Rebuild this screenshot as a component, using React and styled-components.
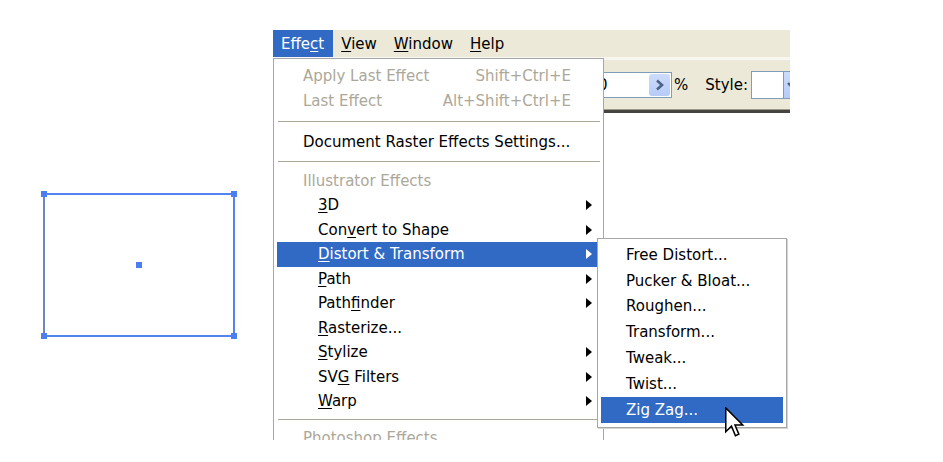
import React from "react";
import styled, { createGlobalStyle } from "styled-components";

const GlobalStyle = createGlobalStyle`
  html, body {
    margin: 0;
    padding: 0;
    background: #ffffff;
  }
  body {
    font-family: "DejaVu Sans", "Liberation Sans", sans-serif;
    font-size: 15px;
    color: #000;
  }
`;

const effectItems = [
  { type: "item", label: "Apply Last Effect", shortcut: "Shift+Ctrl+E", disabled: true },
  { type: "item", label: "Last Effect", shortcut: "Alt+Shift+Ctrl+E", disabled: true },
  { type: "sep", size: 17 },
  { type: "item", label: "Document Raster Effects Settings..." },
  { type: "sep", size: 14 },
  { type: "item", label: "Illustrator Effects", disabled: true },
  { type: "item", label: "3D", key: 0, indent: true, sub: true },
  { type: "item", label: "Convert to Shape", key: 3, indent: true, sub: true },
  { type: "item", label: "Distort & Transform", key: 0, indent: true, sub: true, active: true },
  { type: "item", label: "Path", key: 0, indent: true, sub: true },
  { type: "item", label: "Pathfinder", key: 4, indent: true, sub: true },
  { type: "item", label: "Rasterize...", key: 0, indent: true },
  { type: "item", label: "Stylize", key: 0, indent: true, sub: true },
  { type: "item", label: "SVG Filters", key: 2, indent: true, sub: true },
  { type: "item", label: "Warp", key: 0, indent: true, sub: true },
  { type: "sep", size: 12 },
  { type: "item", label: "Photoshop Effects", disabled: true },
];

const distortItems = [
  "Free Distort...",
  "Pucker & Bloat...",
  "Roughen...",
  "Transform...",
  "Tweak...",
  "Twist...",
  "Zig Zag...",
];

function Label({ text, k }) {
  if (k === undefined) return <span>{text}</span>;
  return (
    <span>
      {text.slice(0, k)}
      <Key>{text[k]}</Key>
      {text.slice(k + 1)}
    </span>
  );
}

function Cursor() {
  return (
    <CursorWrap>
      <svg width="20" height="31" viewBox="0 0 13 20">
        <path
          d="M0.5 0.5 L0.5 16 L4.2 12.4 L6.8 18.6 L9 17.6 L6.5 11.6 L11.5 11.6 Z"
          fill="#fff"
          stroke="#000"
          strokeWidth="1"
          strokeLinejoin="miter"
        />
      </svg>
    </CursorWrap>
  );
}

export default function App() {
  return (
    <>
      <GlobalStyle />
      <Stage>
        <Artboard>
          <Shape>
            <Handle $x="0%" $y="0%" />
            <Handle $x="100%" $y="0%" />
            <Handle $x="0%" $y="100%" />
            <Handle $x="100%" $y="100%" />
            <Handle $x="50%" $y="50%" />
          </Shape>
        </Artboard>

        <AppShot>
          <MenuBar>
            <BarItem $open>
              <Label text="Effect" k={4} />
            </BarItem>
            <BarItem>
              <Label text="View" k={0} />
            </BarItem>
            <BarItem>
              <Label text="Window" k={0} />
            </BarItem>
            <BarItem>
              <Label text="Help" k={0} />
            </BarItem>
          </MenuBar>

          <Toolbar>
            <NumberField>
              <FieldText>100</FieldText>
              <SpinButton>
                <svg width="10" height="12" viewBox="0 0 10 12">
                  <path d="M2 1.5 L7 6 L2 10.5" fill="none" stroke="#4d6185" strokeWidth="2.6" />
                </svg>
              </SpinButton>
            </NumberField>
            <ToolLabel>%</ToolLabel>
            <ToolLabel $gap={17}>Style:</ToolLabel>
            <StyleBox />
            <DropButton>
              <svg width="10" height="10" viewBox="0 0 10 10">
                <path d="M1 3 L5 7 L9 3" fill="none" stroke="#4d6185" strokeWidth="2.4" />
              </svg>
            </DropButton>
          </Toolbar>

          <Menu>
            {effectItems.map((it, i) =>
              it.type === "sep" ? (
                <Separator key={i} $size={it.size} />
              ) : (
                <MenuRow key={i} $indent={it.indent} $disabled={it.disabled} $active={it.active}>
                  <Label text={it.label} k={it.key} />
                  {it.shortcut && <Shortcut>{it.shortcut}</Shortcut>}
                  {it.sub && <SubArrow $active={it.active} />}
                  {it.active && (
                    <SubMenu>
                      {distortItems.map((s, j) => (
                        <SubRow key={s} $active={j === distortItems.length - 1}>
                          {s}
                        </SubRow>
                      ))}
                    </SubMenu>
                  )}
                </MenuRow>
              )
            )}
          </Menu>

          <Cursor />
        </AppShot>
      </Stage>
    </>
  );
}

const Stage = styled.div`
  width: 943px;
  height: 462px;
  display: flex;
  align-items: flex-start;
  overflow: hidden;
`;

const Artboard = styled.div`
  width: 230px;
  padding: 193px 0 0 43px;
  flex-shrink: 0;
`;

const Shape = styled.div`
  position: relative;
  width: 192px;
  height: 144px;
  box-sizing: border-box;
  border: 2px solid #5283f0;
  border-left-color: #6f86c4;
`;

const Handle = styled.div`
  position: absolute;
  left: ${(p) => p.$x};
  top: ${(p) => p.$y};
  width: 6px;
  height: 6px;
  background: #4b7ef2;
  transform: translate(-50%, -50%);
  margin-left: ${(p) => (p.$x === "0%" ? "-1px" : p.$x === "100%" ? "1px" : "0")};
  margin-top: ${(p) => (p.$y === "0%" ? "-1px" : p.$y === "100%" ? "1px" : "0")};
`;

const AppShot = styled.div`
  position: relative;
  margin-top: 30px;
  width: 517px;
  height: 410px;
  overflow: hidden;
  flex-shrink: 0;
`;

const MenuBar = styled.div`
  height: 27px;
  display: flex;
  align-items: stretch;
  background: #ece9d8;
  border-bottom: 3px solid #f7f6f0;
`;

const BarItem = styled.div`
  display: flex;
  align-items: center;
  padding: 0 9px 0 8px;
  background: ${(p) => (p.$open ? "#316ac5" : "transparent")};
  color: ${(p) => (p.$open ? "#fff" : "#000")};
`;

const Key = styled.span`
  text-decoration: underline;
  text-underline-offset: 2px;
  text-decoration-thickness: 1px;
`;

const Toolbar = styled.div`
  height: 50px;
  display: flex;
  align-items: center;
  padding-left: 299px;
  background: #ece9d8;
  border-bottom: 3px solid #45443f;
  box-shadow: inset 0 -1px 0 #9d9a8b;
  white-space: nowrap;
  overflow: hidden;
`;

const NumberField = styled.div`
  width: 100px;
  height: 26px;
  box-sizing: border-box;
  border: 1px solid #7f9db9;
  background: #fff;
  display: flex;
  align-items: center;
  padding: 0 1px 0 6px;
  flex-shrink: 0;
`;

const FieldText = styled.span`
  flex: 1;
`;

const SpinButton = styled.div`
  width: 21px;
  height: 22px;
  border-radius: 3px;
  background: linear-gradient(#cddcfc, #b6cbf7);
  display: flex;
  align-items: center;
  justify-content: center;
`;

const ToolLabel = styled.span`
  margin-left: ${(p) => p.$gap || 2}px;
  flex-shrink: 0;
`;

const StyleBox = styled.div`
  margin-left: 3px;
  width: 32px;
  height: 28px;
  box-sizing: border-box;
  border: 1px solid #7f9db9;
  border-right: none;
  background: #fff;
  flex-shrink: 0;
`;

const DropButton = styled.div`
  width: 18px;
  height: 28px;
  box-sizing: border-box;
  border: 1px solid #7f9db9;
  background: linear-gradient(#cddcfc, #b6cbf7);
  display: flex;
  align-items: center;
  justify-content: center;
  flex-shrink: 0;
`;

const Menu = styled.div`
  position: absolute;
  left: 0;
  top: 28px;
  width: 331px;
  box-sizing: border-box;
  background: #fff;
  border: 1px solid #a7a6aa;
  padding: 5px 0 6px;
  z-index: 2;
`;

const MenuRow = styled.div`
  position: relative;
  height: 24.5px;
  margin: 0 3px;
  display: flex;
  align-items: center;
  padding-left: ${(p) => (p.$indent ? 41 : 26)}px;
  padding-right: 29px;
  white-space: nowrap;
  color: ${(p) => (p.$active ? "#fff" : p.$disabled ? "#aca899" : "#000")};
  background: ${(p) => (p.$active ? "#316ac5" : "transparent")};
`;

const Shortcut = styled.span`
  margin-left: auto;
`;

const SubArrow = styled.span`
  position: absolute;
  right: 8px;
  top: 50%;
  margin-top: -5px;
  width: 0;
  height: 0;
  border-top: 5px solid transparent;
  border-bottom: 5px solid transparent;
  border-left: 6px solid ${(p) => (p.$active ? "#fff" : "#000")};
`;

const Separator = styled.div`
  height: ${(p) => p.$size || 15}px;
  margin: 0 3px 0 4px;
  display: flex;
  align-items: center;
  &::before {
    content: "";
    flex: 1;
    height: 1px;
    background: #aca899;
  }
`;

const SubMenu = styled.div`
  position: absolute;
  left: calc(100% - 3px);
  top: -4px;
  width: 190px;
  box-sizing: border-box;
  background: #fff;
  border: 1px solid #a7a6aa;
  box-shadow: 1px 1px 0 #d8d6cc;
  padding: 3px 0 4px;
  color: #000;
`;

const SubRow = styled.div`
  height: 25.8px;
  margin: 0 3px;
  display: flex;
  align-items: center;
  padding-left: 25px;
  white-space: nowrap;
  color: ${(p) => (p.$active ? "#fff" : "#000")};
  background: ${(p) => (p.$active ? "#316ac5" : "transparent")};
`;

const CursorWrap = styled.div`
  position: absolute;
  left: 452px;
  top: 377px;
  z-index: 5;
  line-height: 0;
`;
